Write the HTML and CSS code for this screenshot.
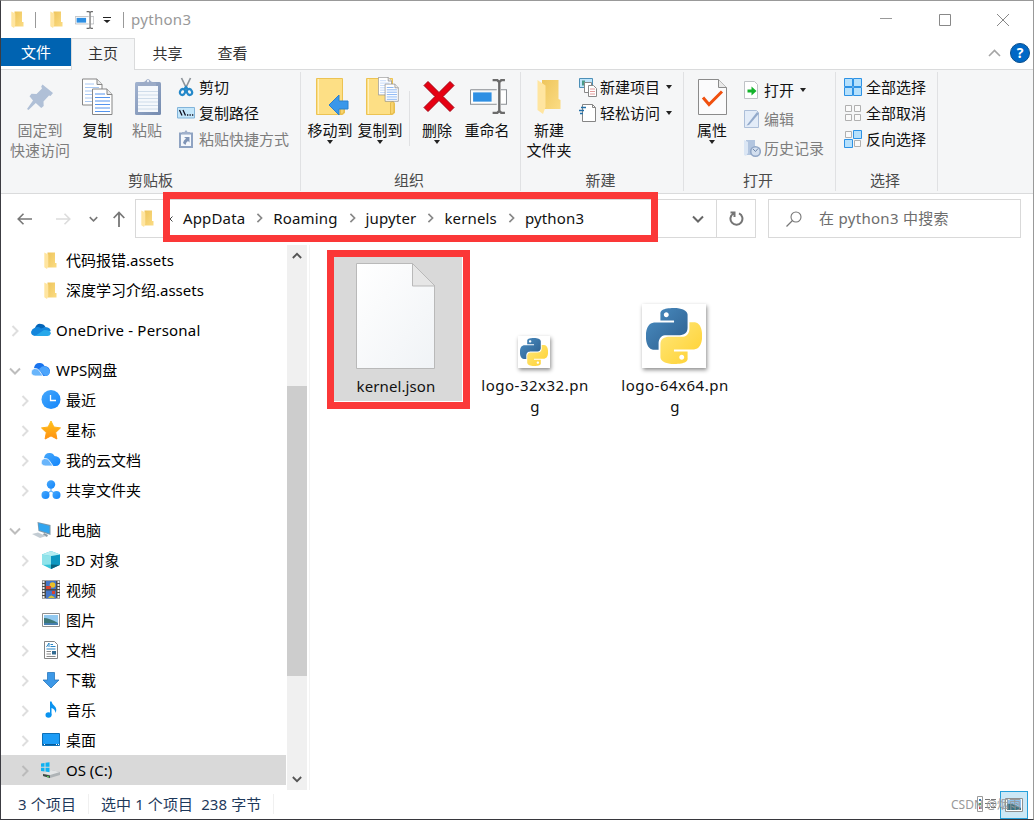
FILE: index.html
```html
<!DOCTYPE html>
<html lang="zh-CN">
  <head>
    <meta charset="UTF-8" />
    <meta name="viewport" content="width=device-width, initial-scale=1.0" />
    <title>python3</title>
    <link rel="stylesheet" href="styles.css">
  </head>
  <body>
    <svg class="defs" width="0" height="0">
      <defs>
        <linearGradient id="gold" x1="0" x2="1" y1="0" y2="1">
          <stop offset="0" stop-color="#eec55c" />
          <stop offset="1" stop-color="#fbdc84" />
        </linearGradient>
        <linearGradient id="paper" x1="0" x2="1" y1="0" y2="1">
          <stop offset="0" stop-color="#ffffff" />
          <stop offset="1" stop-color="#f0f3f6" />
        </linearGradient>
        <linearGradient id="azure" x1="0" x2="1" y1="0" y2="1">
          <stop offset="0" stop-color="#47a8fb" />
          <stop offset="1" stop-color="#1285fb" />
        </linearGradient>
        <linearGradient id="steel" x1="0" x2="1" y1="0" y2="1">
          <stop offset="0" stop-color="#a2b3d0" />
          <stop offset="1" stop-color="#758baf" />
        </linearGradient>
        <linearGradient id="orange" x1="0" x2="0" y1="0" y2="1">
          <stop offset="0" stop-color="#ffc21c" />
          <stop offset="1" stop-color="#ff9112" />
        </linearGradient>
        <linearGradient id="pyblue" x1="0" x2="1" y1="0" y2="1">
          <stop offset="0" stop-color="#4b8fc4" />
          <stop offset="1" stop-color="#2c5c8b" />
        </linearGradient>
        <linearGradient id="pyyellow" x1="1" x2="0" y1="1" y2="0">
          <stop offset="0" stop-color="#ffe87d" />
          <stop offset="1" stop-color="#ffd02e" />
        </linearGradient>
      </defs>
      <symbol id="folder" viewBox="0 0 13 17">
        <path d="M3.5 .5H11v10.500h1.500v4.500h-9z" fill="url(#gold)" />
        <path d="M.3.5 4.300 2.500V14l-1.300 3L.3 15.300z" fill="#ffe5a0" />
      </symbol>
      <symbol id="chevron" viewBox="0 0 8 12">
        <path d="M1.500 1 6.500 6l-5 5" fill="none" stroke="currentColor" stroke-width="2" />
      </symbol>
      <symbol id="chevron-down" viewBox="0 0 12 8">
        <path d="M1 1.500 6 6.500l5-5" fill="none" stroke="currentColor" stroke-width="2" />
      </symbol>
      <symbol id="python" viewBox="0 0 24 24">
        <path d="M14.25.18l.9.2.73.26.59.3.45.32.34.34.25.34.16.33.1.3.04.26.02.2-.01.13V8.5l-.05.63-.13.55-.21.46-.26.38-.3.31-.33.25-.35.19-.35.14-.33.1-.3.07-.26.04-.21.02H8.770l-.69.05-.59.14-.5.22-.41.27-.33.32-.27.35-.2.36-.15.37-.1.35-.07.32-.04.27-.02.21v3.060H3.170l-.21-.03-.28-.07-.32-.12-.35-.18-.36-.26-.36-.36-.35-.46-.32-.59-.28-.73-.21-.88-.14-1.050-.05-1.230.06-1.220.16-1.040.24-.87.32-.71.36-.57.4-.44.42-.33.42-.24.4-.16.36-.1.32-.05.24-.01h.16l.06.01h8.160v-.83H6.180l-.01-2.750-.02-.37.05-.34.11-.31.17-.28.25-.26.31-.23.38-.2.44-.18.51-.15.58-.12.64-.1.71-.06.77-.04.84-.02 1.270.05zm-6.300 1.980l-.23.33-.08.41.08.41.23.34.33.22.41.09.41-.09.33-.22.23-.34.08-.41-.08-.41-.23-.33-.33-.22-.41-.09-.41.09z" fill="url(#pyblue)" />
        <path transform="rotate(180 12 12)" d="M14.25.18l.9.2.73.26.59.3.45.32.34.34.25.34.16.33.1.3.04.26.02.2-.01.13V8.5l-.05.63-.13.55-.21.46-.26.38-.3.31-.33.25-.35.19-.35.14-.33.1-.3.07-.26.04-.21.02H8.770l-.69.05-.59.14-.5.22-.41.27-.33.32-.27.35-.2.36-.15.37-.1.35-.07.32-.04.27-.02.21v3.060H3.170l-.21-.03-.28-.07-.32-.12-.35-.18-.36-.26-.36-.36-.35-.46-.32-.59-.28-.73-.21-.88-.14-1.050-.05-1.230.06-1.220.16-1.040.24-.87.32-.71.36-.57.4-.44.42-.33.42-.24.4-.16.36-.1.32-.05.24-.01h.16l.06.01h8.160v-.83H6.180l-.01-2.750-.02-.37.05-.34.11-.31.17-.28.25-.26.31-.23.38-.2.44-.18.51-.15.58-.12.64-.1.71-.06.77-.04.84-.02 1.270.05zm-6.300 1.980l-.23.33-.08.41.08.41.23.34.33.22.41.09.41-.09.33-.22.23-.34.08-.41-.08-.41-.23-.33-.33-.22-.41-.09-.41.09z" fill="url(#pyyellow)" />
      </symbol>
      <symbol id="rename" viewBox="0 0 36 34">
        <path d="M.5 10.500H26M30 10.500h5.500v14H30M26 24.500H.5v-14" fill="#fff" stroke="#8b8f94" />
        <path d="M3 13h18v9H3z" fill="#2e8fe3" />
        <path d="M22 1h4.500L28.500 3l2-2H34M28.500 3v28M22 33h4.500l2-2 2 2H34" fill="none" stroke="#6b6b6b" stroke-width="2.300" />
      </symbol>
      <symbol id="bigfolder" viewBox="0 0 30 37">
        <path d="M.5.5h26v24l2 1v9.500l-2 1.500H.5z" fill="#fddf85" stroke="#ecc353" />
        <path d="M2.500 1v35" stroke="#fff0bb" />
        <path d="M24.500 36V25q1-2.500 3.500-1v10l-1.500 2z" fill="#f8d36c" stroke="#e5bb4b" />
      </symbol>
      <symbol id="pages" viewBox="0 0 31 37">
        <path d="M.5.5h14.500l5 5.500v20.500H.5z" fill="#fff" stroke="#858585" />
        <path d="M15 .5V6h5" fill="#e8e8e8" stroke="#858585" />
        <path d="M3 5.500h9M3 9h14M3 12.500h14M3 16h14M3 19.500h14M3 23h14" stroke="#a8c8f4" />
        <path d="M10.500 10.500H25l5 5.500v20H10.500z" fill="#fff" stroke="#858585" />
        <path d="M25 10.500V16h5" fill="#e8e8e8" stroke="#858585" />
        <path d="M13 15.500h10M13 19h15M13 22.500h15M13 26h15M13 29.500h15M13 33h15" stroke="#5494ee" />
      </symbol>
    </svg>

    <div class="window">
      <header class="titlebar">
        <svg class="folder-sm"><use href="#folder" /></svg>
        <i class="bar"></i>
        <svg class="folder-sm second"><use href="#folder" /></svg>
        <svg class="rename-sm"><use href="#rename" /></svg>
        <svg class="more" width="8" height="6" viewBox="0 0 8 6">
          <path d="M0 0h8v1H0zM.5 3h7L4 6z" fill="#222" />
        </svg>
        <i class="bar last"></i>
        <span class="title">python3</span>
        <div class="controls">
          <svg width="12" height="12" viewBox="0 0 12 12"><path d="M0 4.500h12" stroke="#999" /></svg>
          <svg width="12" height="12" viewBox="0 0 12 12"><path d="M.5.5h11v11H.5z" fill="none" stroke="#888" /></svg>
          <svg width="12" height="12" viewBox="0 0 12 12"><path d="M0 0l12 12M12 0 0 12" stroke="#888" /></svg>
        </div>
      </header>

      <nav class="tabs">
        <span class="tab file">文件</span>
        <span class="tab active">主页</span>
        <span class="tab">共享</span>
        <span class="tab">查看</span>
        <div class="tabs-right">
          <svg width="13" height="8" viewBox="0 0 13 8"><path d="M1 7l5.500-5.500L12 7" fill="none" stroke="#a5a5a5" stroke-width="1.600" /></svg>
          <span class="help">?</span>
        </div>
      </nav>

      <section class="ribbon">
        <div class="group clipboard">
          <div class="tools">
            <div class="big off">
              <svg width="28" height="40" viewBox="0 0 28 40">
                <path d="M16.500 7.500 27 16l-2.500 3-1.500-.5-5.500 6 .2 4.500-2.500 2L9.800 26 2.500 33 1 32l6-8.500-3.500-4.300 2-2.400 5 .2 5.500-5.500-.8-2z" fill="#b0c0d7" />
              </svg>
              <span>固定到<br>快速访问</span>
            </div>
            <div class="big">
              <svg width="31" height="40"><use href="#pages" y="1" width="31" height="38" /></svg>
              <span>复制</span>
            </div>
            <div class="big off">
              <svg width="28" height="40" viewBox="0 0 28 40">
                <rect x="1" y="5" width="26" height="33" rx="1.500" fill="url(#steel)" />
                <path d="M4 9h20v26H4z" fill="#f5f8fc" />
                <path d="M4 14.500h20M4 18h20M4 21.500h20M4 25h20M4 28.500h20M4 32h20" stroke="#cfdcea" />
                <path d="M6 9V6l5-1.500q3-5 6 0L22 6v3z" fill="#9babc7" />
                <circle cx="14" cy="4" r="1.200" fill="#e9eef6" />
              </svg>
              <span>粘贴</span>
            </div>
            <ul class="list">
              <li>
                <svg width="18" height="20" viewBox="0 0 18 20">
                  <path d="M4.500 1 10 12.500M13.500 1 8 12.500" stroke="#8f959b" stroke-width="1.700" />
                  <g fill="none" stroke="#2488c9" stroke-width="2.200"><ellipse cx="5.500" cy="15" rx="2.500" ry="3" transform="rotate(25 5.500 15)" /><ellipse cx="12.500" cy="15" rx="2.500" ry="3" transform="rotate(-25 12.500 15)" /><path d="M7 12.500 9 10l2 2.500" /></g>
                </svg>剪切
              </li>
              <li>
                <svg width="18" height="12" viewBox="0 0 18 12">
                  <path d="M.5.5h17v10.500H.5z" fill="#c3e6fa" stroke="#82b4da" />
                  <path d="M2.500 3 5 8.500M6 3l2.500 5.500M10 8h1.300M12.500 8h1.300M15 8h1.300" stroke="#112" stroke-width="1.300" />
                </svg>复制路径
              </li>
              <li class="off">
                <svg width="18" height="20" viewBox="0 0 18 20">
                  <path d="M3 4.500h12V18H3z" fill="#f5f8fc" stroke="#8fa3c2" stroke-width="2" />
                  <path d="M5 5V3h2.500Q9-.5 10.500 3H13v2z" fill="#a0b0cb" />
                  <path d="M7 8h5.500v5.500L11 12q-2 1-2.500 4L6 14q.5-3 3-4.500z" fill="#7f94b6" />
                </svg>粘贴快捷方式
              </li>
            </ul>
          </div>
          <p class="caption">剪贴板</p>
        </div>

        <div class="group organize">
          <div class="tools">
            <div class="big">
              <svg width="34" height="40" viewBox="0 0 34 40">
                <use href="#bigfolder" x="1" y="1" width="30" height="37" />
                <path d="M14 28 24 18v6h9v8h-9v6z" fill="#3997ea" stroke="#2a80cf" />
              </svg>
              <span>移动到</span>
              <i class="caret"></i>
            </div>
            <div class="big">
              <svg width="34" height="40" viewBox="0 0 34 40">
                <use href="#bigfolder" x="1" y="1" width="30" height="37" />
                <use href="#pages" x="13" y="0" width="21" height="25" />
              </svg>
              <span>复制到</span>
              <i class="caret"></i>
            </div>
            <i class="split"></i>
            <div class="big">
              <svg width="32" height="40" viewBox="0 0 32 40">
                <path d="M1 8.500 5 4.500l11 11 11-11 4 4-11 11 11 11-4 4-11-11-11 11-4-4 11-11z" fill="#e60012" stroke="#a30010" />
              </svg>
              <span>删除</span>
              <i class="caret"></i>
            </div>
            <div class="big">
              <svg width="37" height="40"><use href="#rename" y="2" width="37" height="35" /></svg>
              <span>重命名</span>
            </div>
          </div>
          <p class="caption">组织</p>
        </div>

        <div class="group create">
          <div class="tools">
            <div class="big">
              <svg width="25" height="40" viewBox="0 0 25 40">
                <path d="M5 3h16.500v19l2 1v9H5z" fill="url(#gold)" />
                <path d="M.5 3 8.500 8.500V30L6 37 .5 33z" fill="#ffe5a0" />
              </svg>
              <span>新建<br>文件夹</span>
            </div>
            <ul class="list">
              <li>
                <svg width="18" height="20" viewBox="0 0 18 20">
                  <path d="M.5 1.500h13v9H.5z" fill="#bfe5fb" stroke="#4c8fb7" />
                  <path d="M3 3.500h3v5H3z" fill="#4a9b88" />
                  <path d="M5.500 5.500h7v10h-7z" fill="#fff" stroke="#888" />
                  <path d="M9.500 8.500h5l3 3v8h-8z" fill="#fff" stroke="#888" />
                  <path d="M11 12h5M11 14.500h5M11 17h5" stroke="#e29a9a" />
                </svg>新建项目<i class="caret"></i>
              </li>
              <li>
                <svg width="18" height="20" viewBox="0 0 18 20">
                  <path d="M3.500 1.500h10l3 3v14h-13z" fill="#fff" stroke="#858585" />
                  <path d="M13.500 1.500v3h3" fill="none" stroke="#858585" />
                  <path d="M2 4.500h5M0 7.500h5M1 10.500h3" stroke="#236fa8" stroke-width="1.400" />
                </svg>轻松访问<i class="caret"></i>
              </li>
            </ul>
          </div>
          <p class="caption">新建</p>
        </div>

        <div class="group open">
          <div class="tools">
            <div class="big">
              <svg width="29" height="40" viewBox="0 0 29 40">
                <path d="M.5 2.500h20l8 8v27H.5z" fill="#fbfbfc" stroke="#8b8b8b" />
                <path d="M20.500 2.500v8h8" fill="#e9e9e9" stroke="#8b8b8b" />
                <path d="M5 20.500 11 27.500 24 14.500" fill="none" stroke="#f0500f" stroke-width="3" />
              </svg>
              <span>属性</span>
              <i class="caret"></i>
            </div>
            <ul class="list">
              <li>
                <svg width="18" height="20" viewBox="0 0 18 20">
                  <path d="M1.500 1.500h10l3 3v14h-13z" fill="#fff" stroke="#bfc2c6" />
                  <path d="M4.500 9.500h4V6.500l5 4.500-5 4.500v-3h-4z" fill="#14b32c" />
                </svg>打开<i class="caret"></i>
              </li>
              <li class="off">
                <svg width="18" height="20" viewBox="0 0 18 20">
                  <path d="M1.500 1.500h12l2 2v15h-14z" fill="#e3ecf8" stroke="#adbfd9" />
                  <path d="M3.500 16.500 14 3l2 1.500L6 16z" fill="#93aacb" />
                </svg>编辑
              </li>
              <li class="off">
                <svg width="18" height="20" viewBox="0 0 18 20">
                  <path d="M3 2h9v15H3z" fill="#b2c5df" /><path d="M1 2l4 2v11l-2 3-2-1z" fill="#dbe6f4" />
                  <circle cx="12.500" cy="13.500" r="4.800" fill="#d3dfef" stroke="#91a7c7" stroke-width="1.600" />
                  <path d="M10 11l2.500 2.500 2.500-3" fill="none" stroke="#7088aa" />
                </svg>历史记录
              </li>
            </ul>
          </div>
          <p class="caption">打开</p>
        </div>

        <div class="group select">
          <div class="tools">
            <ul class="list">
              <li>
                <svg width="18" height="18" viewBox="0 0 18 18">
                  <path d="M.5.5h8v8h-8zM9.500.5h8v8h-8zM.5 9.500h8v8h-8zM9.500 9.500h8v8h-8z" fill="#b5e0fc" stroke="#2d92e5" />
                </svg>全部选择
              </li>
              <li>
                <svg width="18" height="18" viewBox="0 0 18 18">
                  <path d="M1.500 1.500h6v6h-6zM10.500 1.500h6v6h-6zM1.500 10.500h6v6h-6zM10.500 10.500h6v6h-6z" fill="#fafafa" stroke="#b0b0b0" />
                </svg>全部取消
              </li>
              <li>
                <svg width="18" height="18" viewBox="0 0 18 18">
                  <path d="M1.500 1.500h6v6h-6zM10.500 10.500h6v6h-6z" fill="#fafafa" stroke="#b0b0b0" />
                  <path d="M9.500.5h8v8h-8zM.5 9.500h8v8h-8z" fill="#b5e0fc" stroke="#2d92e5" />
                </svg>反向选择
              </li>
            </ul>
          </div>
          <p class="caption">选择</p>
        </div>
      </section>

      <section class="location">
        <div class="arrows">
          <svg width="15" height="12" viewBox="0 0 15 12"><path d="M15 6H1M6.500.7 1.200 6l5.300 5.300" fill="none" stroke="#777" stroke-width="1.600" /></svg>
          <svg width="15" height="12" viewBox="0 0 15 12"><path d="M0 6h14M8.500.7 13.800 6l-5.300 5.300" fill="none" stroke="#dcdcdc" stroke-width="1.600" /></svg>
          <svg class="recent" width="9" height="6"><use href="#chevron-down" /></svg>
          <svg width="12" height="16" viewBox="0 0 12 16"><path d="M6 16V1.500M.7 7 6 1.500 11.300 7" fill="none" stroke="#777" stroke-width="1.800" /></svg>
        </div>
        <div class="address">
          <svg class="folder-sm"><use href="#folder" /></svg>
          <svg class="first" width="4" height="6" viewBox="0 0 4 6"><path d="M3.500.5 1 3l2.500 2.500" fill="none" stroke="#444" /></svg>
          <div class="crumbs">
            <span>AppData</span><svg class="sep"><use href="#chevron" /></svg>
            <span>Roaming</span><svg class="sep"><use href="#chevron" /></svg>
            <span>jupyter</span><svg class="sep"><use href="#chevron" /></svg>
            <span>kernels</span><svg class="sep"><use href="#chevron" /></svg>
            <span>python3</span>
          </div>
          <svg class="drop" width="12" height="8"><use href="#chevron-down" /></svg>
          <div class="refresh">
            <svg width="15" height="15" viewBox="0 0 15 15"><path d="M10 2.300A6 6 0 1 1 4.500 2.500M1.500 1.500h4v4.500" fill="none" stroke="#757575" stroke-width="2" /></svg>
          </div>
          <div class="mark mark-path"></div>
        </div>
        <div class="search">
          <svg width="16" height="16" viewBox="0 0 16 16"><circle cx="10" cy="6" r="5" fill="none" stroke="#777" stroke-width="1.100" /><path d="M6.500 9.500.5 15.500" stroke="#777" stroke-width="1.200" /></svg>
          <span>在 python3 中搜索</span>
        </div>
      </section>

      <main class="content">
        <aside class="sidebar">
          <ul class="tree">
            <li class="leaf"><svg class="folder-sm"><use href="#folder" /></svg>代码报错.assets</li>
            <li class="leaf"><svg class="folder-sm"><use href="#folder" /></svg>深度学习介绍.assets</li>
            <li class="root onedrive">
              <svg class="tw"><use href="#chevron" /></svg>
              <svg class="ico" viewBox="0 0 20 20"><path d="M4 8q2-5 6-4 3 0 4.500 3l-6 5z" fill="#0364b8" /><path d="M3.500 8Q7 6 10 8.500L14.500 7q5 .5 5.200 4l-6 2L4 16Q-.5 15 .2 11.500 1 8.500 3.500 8z" fill="#1486dc" /><path d="M4 16 13 10q7 0 6.800 3.500Q19 16 16.500 16z" fill="#28a8ea" /></svg>
              OneDrive - Personal
            </li>
            <li class="root">
              <svg class="tw open"><use href="#chevron-down" /></svg>
              <svg class="ico" viewBox="0 0 20 20"><path d="M3 8q1-5.500 6-5 3 0 4.500 3 5 .5 5.500 5-.5 5-5 5H11L5 9z" fill="#1873ee" /><path d="M11 6.500q6-1 8 5-.5 4.500-5 4.500-5-4-6-7z" fill="#4ca4fb" /><path d="M3.500 8.500q3.500-.5 5 2.500l3.500 5H4q-4-.5-3.800-4 .3-3 3.300-3.500z" fill="#69b5fb" stroke="#fff" stroke-width=".8" /></svg>
              WPS网盘
            </li>
            <li>
              <svg class="tw"><use href="#chevron" /></svg>
              <svg class="ico" viewBox="0 0 20 20"><circle cx="10" cy="9.500" r="9.500" fill="url(#azure)" /><path d="M9.500 5v5.500H15" fill="none" stroke="#fff" stroke-width="1.300" /></svg>
              最近
            </li>
            <li>
              <svg class="tw"><use href="#chevron" /></svg>
              <svg class="ico" viewBox="0 0 20 20"><path d="M10 1l2.900 6 6.600.9-4.800 4.600 1.200 6.500-5.900-3.100L4.100 19l1.200-6.500L.5 7.900 7.100 7z" fill="url(#orange)" stroke="url(#orange)" stroke-linejoin="round" /></svg>
              星标
            </li>
            <li>
              <svg class="tw"><use href="#chevron" /></svg>
              <svg class="ico" viewBox="0 0 20 20"><path d="M3 8q1-5.500 6-5 3 0 4.500 3 5.500.5 6 5-.5 5-5 5H11L5 9z" fill="url(#azure)" /><path d="M3.500 8.500q3.500-.5 5 2.500l3.500 5H4q-4-.5-3.800-4 .3-3 3.300-3.500z" fill="#69b5fb" stroke="#fff" stroke-width=".8" /></svg>
              我的云文档
            </li>
            <li>
              <svg class="tw"><use href="#chevron" /></svg>
              <svg class="ico" viewBox="0 0 20 20"><path d="M10 5v6l-5 3M10 11l5 3" fill="none" stroke="#5fb0fc" stroke-width="1.200" /><g fill="url(#azure)"><circle cx="10" cy="4.500" r="4.200" /><circle cx="4.500" cy="15" r="4" /><circle cx="15.500" cy="15" r="4" /></g></svg>
              共享文件夹
            </li>
            <li class="root">
              <svg class="tw open"><use href="#chevron-down" /></svg>
              <svg class="ico" viewBox="0 0 20 20"><path d="M6.500 2 19.500 5v10L7.500 11z" fill="#7d98aa" /><path d="M7.500 3 18.500 6v7.500L8 10z" fill="#30a5f0" /><path d="M13 13l4 2-1 2-4-2z" fill="#8c9aa5" /><path d="M1 14l6-1.500 8 3.500-6 2z" fill="#c3ccd3" /></svg>
              此电脑
            </li>
            <li>
              <svg class="tw"><use href="#chevron" /></svg>
              <svg class="ico" viewBox="0 0 20 20"><path d="M1 4.500 10 1l9 3.500v10L10 19l-9-4.500z" fill="#35c3d8" /><path d="M10 6l9-1.500v10L10 19z" fill="#0c97c0" /><path d="M1 4.500 10 6v8.500l-9 .500z" fill="#8fe3ea" /><path d="M1 4.500 10 1l9 3.500L10 6z" fill="#b5edf1" /><path d="M10 14.500l9 .500-9 4z" fill="#08627f" /></svg>
              3D 对象
            </li>
            <li>
              <svg class="tw"><use href="#chevron" /></svg>
              <svg class="ico" viewBox="0 0 20 20"><path d="M1 .5h18v18H1z" fill="#4a4a4a" /><path d="M2.500 1v18M17.500 1v18" stroke="#eee" stroke-width="2" stroke-dasharray="2 1" /><path d="M5 1h10v8H5zM5 10.500h10v8H5z" fill="#4476c8" /><circle cx="11.500" cy="5" r="2.800" fill="#eac027" /><path d="M5 6h5v3H5zM11 11h3v3h-3z" fill="#d9422f" /><path d="M7 18q3-5 7 0z" fill="#d9c22c" /></svg>
              视频
            </li>
            <li>
              <svg class="tw"><use href="#chevron" /></svg>
              <svg class="ico" viewBox="0 0 20 20"><path d="M1.500 3.500h17v13h-17z" fill="#fff" stroke="#909090" /><path d="M3 5h14v10H3z" fill="#92c9f0" /><path d="M3 8q5 0 14 5v2H3z" fill="#3c7777" /><path d="M3 13h14v2H3z" fill="#477fb0" /></svg>
              图片
            </li>
            <li>
              <svg class="tw"><use href="#chevron" /></svg>
              <svg class="ico" viewBox="0 0 20 20"><path d="M3.500 1.500h10l3 3v14h-13z" fill="#fff" stroke="#858585" /><path d="M5.500 7 8 3v4M9.500 4.500H12M9.500 6.500h5M5.500 9h9" fill="none" stroke="#2b86c6" /><path d="M5.500 11.500H10M5.500 14H10M5.500 16.500h9" stroke="#888" /><path d="M11 11h4v3.500h-4z" fill="#346b91" /></svg>
              文档
            </li>
            <li>
              <svg class="tw"><use href="#chevron" /></svg>
              <svg class="ico" viewBox="0 0 20 20"><path d="M6.500 2.500h7V10h4.500l-8 8-8-8h4.500z" fill="#3c98e7" stroke="#2877bd" stroke-width=".8" /></svg>
              下载
            </li>
            <li>
              <svg class="tw"><use href="#chevron" /></svg>
              <svg class="ico" viewBox="0 0 20 20"><ellipse cx="7.500" cy="15" rx="3" ry="2.800" fill="#0a93ef" /><path d="M9 15V1.500h1.500q.5 2.500 3 4.500 3 3 1 7-.3-4-4-5v7.500z" fill="#0a93ef" /></svg>
              音乐
            </li>
            <li>
              <svg class="tw"><use href="#chevron" /></svg>
              <svg class="ico" viewBox="0 0 20 20"><path d="M1.500 3.500h17v12h-17z" fill="#1c9cf6" stroke="#0c70b8" /><path d="M2 14.500h16" stroke="#075a97" /><path d="M3 14.500h1M15 14.500h1M17 14.500h1" stroke="#fff" /></svg>
              桌面
            </li>
            <li class="selected">
              <svg class="tw"><use href="#chevron" /></svg>
              <svg class="ico" viewBox="0 0 20 20"><path d="M2 14l8-4 9 2v3l-10 3-7-2z" fill="#aeb3b6" /><path d="M2 13.500 10 10l9 2-10 3z" fill="#e3e5e6" /><path d="M2 14l7 1.500V18l-7-2z" fill="#3d4a44" /><path d="M6 16l2 .5v1l-2-.500z" fill="#5bdc55" /><path d="M0 3.500 3.500 3v3.700H0zM4.500 2.800 8.500 2.200v4.500h-4zM0 7.700h3.500v3.700L0 11zM4.500 7.700h4v4.500l-4-.600z" fill="#0eb2f2" /></svg>
              OS (C:)
            </li>
          </ul>
          <div class="scrollbar">
            <svg width="10" height="7" viewBox="0 0 12 8"><path d="M1 7l5-5 5 5" fill="none" stroke="#555" stroke-width="2.200" /></svg>
            <div class="thumb"></div>
            <svg width="10" height="7" viewBox="0 0 12 8"><path d="M1 1l5 5 5-5" fill="none" stroke="#555" stroke-width="2.200" /></svg>
          </div>
        </aside>

        <section class="files">
          <div class="tile selected">
            <svg class="doc" width="80" height="107" viewBox="0 0 80 107">
              <path d="M.5.5h56l22 22v83H.5z" fill="url(#paper)" stroke="#b9b9b9" />
              <path d="M56.500.5v22.500H79z" fill="#e6e6e6" stroke="#b9b9b9" />
            </svg>
            <p>kernel.json</p>
            <div class="mark mark-file"></div>
          </div>
          <div class="tile">
            <div class="thumbnail small"><svg width="28" height="28"><use href="#python" /></svg></div>
            <p>logo-32x32.pn<br>g</p>
          </div>
          <div class="tile">
            <div class="thumbnail"><svg width="56" height="56"><use href="#python" /></svg></div>
            <p>logo-64x64.pn<br>g</p>
          </div>
        </section>
      </main>

      <footer class="status">
        <span>3 个项目</span>
        <span class="picked">选中 1 个项目&nbsp; 238 字节</span>
        <div class="views">
          <svg class="details" width="20" height="17" viewBox="0 0 20 17">
            <path d="M.5.5h5v15h-5z" fill="#fff" stroke="#999" />
            <path d="M2 3h2v2H2z" fill="#397bb5" /><path d="M2 7h2v2H2z" fill="#55a347" /><path d="M2 11h2v2H2z" fill="#c84031" />
            <path d="M8 3.500h5M14 3.500h5M8 7.500h5M14 7.500h5M8 11.500h5M14 11.500h5" stroke="#777" />
          </svg>
          <div class="view-on">
            <svg width="18" height="14" viewBox="0 0 18 14"><path d="M.5.5h17v13H.5z" fill="#fff" stroke="#909090" /><path d="M2 2h14v10H2z" fill="#8fc3ec" /><path d="M2 6q6-1 14 4v2H2z" fill="#397282" /></svg>
          </div>
          <span class="watermark">CSDN @烟雨</span>
        </div>
      </footer>
    </div>
  </body>
</html>
```
FILE: styles.css
```css
* {
  margin: 0;
  padding: 0;
  box-sizing: border-box;
}

body {
  width: 1034px;
  height: 820px;
  overflow: hidden;
  background: #fff;
  color: #111;
  font-family: "Noto Sans", "Noto Sans CJK SC", sans-serif;
  font-size: 15px;
  line-height: 20px;
}

ul {
  list-style: none;
}

svg {
  display: block;
  flex: none;
}

.defs {
  position: absolute;
}

.window {
  width: 1034px;
  height: 820px;
  display: flex;
  flex-direction: column;
  border: 1px solid #999;
  border-left-color: #3c3c42;
  border-bottom-color: #37373d;
}

.folder-sm {
  width: 13px;
  height: 17px;
}

/* title bar */
.titlebar {
  height: 37px;
  display: flex;
  align-items: center;
  padding-left: 10px;
}

.bar {
  width: 1px;
  height: 16px;
  background: #999;
  margin: 0 14px 0 11px;
}

.rename-sm {
  width: 19px;
  height: 18px;
  margin: 0 9px 0 12px;
}

.bar.last {
  margin: 0 7px 0 12px;
}

.title {
  color: #999;
  letter-spacing: 0.3px;
  padding-bottom: 2px;
}

.controls {
  margin-left: auto;
  margin-right: 24px;
  display: flex;
  gap: 46.5px;
}

/* tabs */
.tabs {
  height: 32px;
  display: flex;
  position: relative;
  border-bottom: 1px solid #dadbdc;
}

.tab {
  width: 65px;
  height: 31px;
  line-height: 31px;
  text-align: center;
  color: #333;
}

.tab.file {
  width: 70px;
  height: 28px;
  line-height: 29px;
  background: #0063b1;
  color: #fff;
}

.tab.active {
  width: 64px;
  height: 32px;
  line-height: 29px;
  background: #f5f6f7;
  border: 1px solid #dadbdc;
  border-bottom: none;
}

.tabs-right {
  margin-left: auto;
  height: 29px;
  margin-right: 3px;
  display: flex;
  align-items: center;
  gap: 9px;
}

.help {
  width: 20px;
  height: 20px;
  border-radius: 50%;
  background: #0068c6;
  border: 1px solid #0b4f8c;
  color: #fff;
  font-weight: bold;
  font-size: 14px;
  line-height: 18px;
  text-align: center;
}

/* ribbon */
.ribbon {
  height: 124px;
  display: flex;
  background: #f5f6f7;
  border-bottom: 1px solid #dadbdc;
}

.group {
  position: relative;
  height: 119px;
  margin-top: 2px;
  display: flex;
  flex-direction: column;
  border-right: 1px solid #e0e1e3;
}

.clipboard {
  width: 300px;
}

.organize {
  width: 220px;
}

.create {
  width: 163px;
}

.open {
  width: 152px;
}

.select {
  width: 102px;
}

.tools {
  display: flex;
  height: 98px;
}

.caption {
  text-align: center;
  color: #4a4a4a;
}

.organize .caption,
.create .caption,
.open .caption,
.select .caption {
  padding-right: 3px;
}

.big {
  display: flex;
  flex-direction: column;
  align-items: center;
  text-align: center;
  padding-top: 5px;
  width: 50px;
  white-space: nowrap;
}

.big span {
  margin-top: 3px;
}

.big > .caret {
  margin-top: 0;
}

.off {
  color: #7d7d7d;
}

.caret {
  width: 0;
  height: 0;
  border: 3.5px solid transparent;
  border-top: 4px solid #222;
  border-bottom: none;
}

.list {
  padding-top: 2px;
}

.list li {
  height: 26px;
  display: flex;
  align-items: center;
  gap: 3px;
  white-space: nowrap;
}

.list .caret {
  margin-left: 3px;
}

.clipboard .big:first-child {
  width: 78px;
}

.clipboard .big:nth-child(2) {
  width: 37px;
}

.clipboard .big:nth-child(3) {
  width: 62px;
}

.clipboard .big:nth-child(3) svg {
  margin-left: 2px;
}

.clipboard .list li {
  gap: 4px;
  margin-left: -1px;
}

.organize .tools {
  padding-left: 4px;
}

.organize .big svg {
  margin: 0 -2px 0 1px;
}

.split {
  width: 1px;
  height: 55px;
  margin: 19px 2px 0 4px;
  background: #e0e1e3;
}

.create .big {
  width: 56px;
}

.open .big {
  width: 56px;
}

.open .list {
  padding-left: 3px;
  padding-top: 3px;
}

.open .list li {
  height: 29px;
}

.create .list {
  padding-left: 2px;
}

.select .list {
  padding-left: 8px;
}

.select .list li {
  gap: 4px;
}

/* location */
.location {
  height: 50px;
  display: flex;
  padding-top: 5px;
}

.arrows {
  width: 134px;
  height: 39px;
  display: flex;
  align-items: center;
  padding-left: 16px;
  gap: 24px;
  color: #777;
}

.arrows .recent {
  margin: 0 -9px 0 -6px;
}

.address {
  position: relative;
  width: 621px;
  height: 39px;
  display: flex;
  align-items: center;
  border: 1px solid #d9d9d9;
  padding-left: 5px;
}

.first {
  margin-left: 15px;
}

.crumbs {
  width: 509px;
  margin-left: 10px;
  padding-bottom: 2px;
  display: flex;
  align-items: center;
  letter-spacing: 0.15px;
}

.sep {
  width: 7px;
  height: 10px;
  margin: 0 10px 0 11px;
  color: #888;
}

.drop {
  color: #666;
}

.refresh {
  width: 39px;
  height: 37px;
  margin-left: auto;
  display: flex;
  align-items: center;
  justify-content: center;
  border-left: 1px solid #d9d9d9;
}

.search {
  width: 253px;
  height: 39px;
  margin-left: 12px;
  display: flex;
  align-items: center;
  gap: 17px;
  padding-left: 17px;
  border: 1px solid #d9d9d9;
  color: #6d6d6d;
}

.search span {
  padding-bottom: 2px;
  letter-spacing: 0.3px;
}

/* red highlight boxes */
.mark {
  position: absolute;
  border: 7px solid #fb3838;
}

.mark-path {
  left: 27px;
  top: -8px;
  width: 495px;
  height: 50px;
}

.mark-file {
  left: -7px;
  top: -7px;
  width: 143px;
  height: 159px;
}

/* content */
.content {
  height: 546px;
  display: flex;
}

.sidebar {
  width: 309px;
  height: 545px;
  margin-top: 1px;
  display: flex;
  border-right: 1px solid #f3f3f3;
}

.tree {
  width: 285px;
  color: #000;
}

.tree li {
  height: 30px;
  display: flex;
  align-items: center;
  padding-left: 20px;
  white-space: nowrap;
}

.tree .leaf {
  padding-left: 43px;
}

.leaf .folder-sm {
  margin-right: 9px;
}

.tree .root {
  margin-top: 10px;
  padding-left: 10px;
}

.onedrive {
  letter-spacing: 0.2px;
}

.tw {
  width: 8px;
  height: 12px;
  margin-top: 2px;
  margin-right: 12px;
  color: #dedede;
}

.tw.open {
  width: 12px;
  height: 8px;
  margin: 2px 10px 0 -2px;
  color: #bdbdbd;
}

.ico {
  width: 20px;
  height: 20px;
  margin-right: 5px;
}

.tree .selected {
  background: #d9d9d9;
}

.selected .tw {
  color: #bbb;
}

.scrollbar {
  width: 20px;
  margin-left: 1px;
  display: flex;
  flex-direction: column;
  align-items: center;
  justify-content: space-between;
  padding: 7px 0;
  background: #f0f0f0;
}

.thumb {
  width: 20px;
  height: 290px;
  margin-top: 26px;
  background: #cdcdcd;
}

.files {
  display: flex;
  padding: 13px 0 0 24px;
}

.tile {
  position: relative;
  width: 140px;
  height: 165px;
  display: flex;
  flex-direction: column;
  align-items: center;
  text-align: center;
}

.tile.selected {
  width: 128px;
  height: 144px;
  margin-right: 3px;
  padding-right: 4px;
  background: #d9d9d9;
}

.tile p {
  line-height: 21px;
  margin-top: 7px;
  letter-spacing: 0.5px;
}

.doc {
  margin-top: 6px;
}

.tile.selected p {
  margin-top: 6px;
  letter-spacing: 0.1px;
}

.thumbnail {
  width: 64px;
  height: 64px;
  margin-top: 47px;
  margin-right: 3px;
  padding: 4px;
  background: #fff;
  box-shadow: 1px 2px 4px rgba(0, 0, 0, 0.45);
}

.thumbnail.small {
  width: 32px;
  height: 32px;
  margin-top: 79px;
  padding: 2px;
}

/* status bar */
.status {
  height: 29px;
  display: flex;
  align-items: center;
  padding-left: 17px;
  color: #1e395b;
}

.status > span {
  padding-right: 12px;
  margin-bottom: 2px;
  letter-spacing: 0.1px;
  border-right: 1px solid #f0f0f0;
}

.status .picked {
  padding-left: 12px;
}

.views {
  position: relative;
  margin-left: auto;
  margin-right: 5px;
  display: flex;
  align-items: center;
  gap: 3px;
}

.view-on {
  width: 28px;
  height: 28px;
  display: flex;
  align-items: center;
  justify-content: center;
  background: #cce8f6;
  border: 1px solid #26a0da;
}

.watermark {
  position: absolute;
  left: -26px;
  top: 4px;
  color: #999;
  font-size: 12px;
  white-space: nowrap;
}
```
